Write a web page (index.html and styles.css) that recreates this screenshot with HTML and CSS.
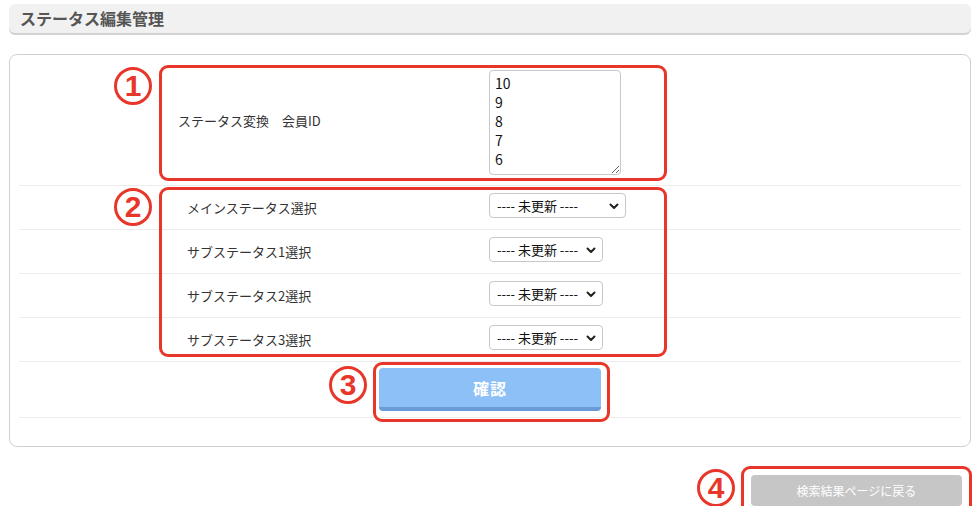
FILE: index.html
```html
<!DOCTYPE html>
<html lang="ja">
<head>
    <meta charset="UTF-8">
    <meta name="viewport" content="width=device-width, initial-scale=1.0">
    <title>ステータス編集管理</title>
    <link rel="stylesheet" href="styles.css">
</head>
<body>
    <h1 class="page-title">ステータス編集管理</h1>

    <form class="panel">
        <div class="row row-first">
            <label class="row-label first" for="member-ids">ステータス変換　会員ID</label>
            <div class="row-value">
                <textarea id="member-ids" class="ids">10
9
8
7
6</textarea>
            </div>
        </div>
        <div class="row">
            <label class="row-label">メインステータス選択</label>
            <div class="row-value">
                <span class="select-wrap wide">
                    <select><option>---- 未更新 ----</option></select>
                    <svg class="chev" width="10" height="7" viewBox="0 0 10 7"><path d="M1.5 1.5 L5 5 L8.5 1.5" fill="none" stroke="#222" stroke-width="2" stroke-linecap="round" stroke-linejoin="round"/></svg>
                </span>
            </div>
        </div>
        <div class="row">
            <label class="row-label">サブステータス1選択</label>
            <div class="row-value">
                <span class="select-wrap">
                    <select><option>---- 未更新 ----</option></select>
                    <svg class="chev" width="10" height="7" viewBox="0 0 10 7"><path d="M1.5 1.5 L5 5 L8.5 1.5" fill="none" stroke="#222" stroke-width="2" stroke-linecap="round" stroke-linejoin="round"/></svg>
                </span>
            </div>
        </div>
        <div class="row">
            <label class="row-label">サブステータス2選択</label>
            <div class="row-value">
                <span class="select-wrap">
                    <select><option>---- 未更新 ----</option></select>
                    <svg class="chev" width="10" height="7" viewBox="0 0 10 7"><path d="M1.5 1.5 L5 5 L8.5 1.5" fill="none" stroke="#222" stroke-width="2" stroke-linecap="round" stroke-linejoin="round"/></svg>
                </span>
            </div>
        </div>
        <div class="row">
            <label class="row-label">サブステータス3選択</label>
            <div class="row-value">
                <span class="select-wrap">
                    <select><option>---- 未更新 ----</option></select>
                    <svg class="chev" width="10" height="7" viewBox="0 0 10 7"><path d="M1.5 1.5 L5 5 L8.5 1.5" fill="none" stroke="#222" stroke-width="2" stroke-linecap="round" stroke-linejoin="round"/></svg>
                </span>
            </div>
        </div>
        <div class="row row-submit">
            <button type="button" class="btn-confirm">確認</button>
        </div>

        <!-- annotation marks -->
        <span class="mark mark-1">1</span>
        <span class="note-box box-1"></span>
        <span class="mark mark-2">2</span>
        <span class="note-box box-2"></span>
        <span class="mark mark-3">3</span>
        <span class="note-box box-3"></span>
    </form>

    <div class="footer">
        <div class="back-wrap">
            <span class="mark mark-4">4</span>
            <span class="note-box box-4"></span>
            <button type="button" class="btn-back">検索結果ページに戻る</button>
        </div>
    </div>
</body>
</html>
```

FILE: styles.css
```css
body {
    margin: 0;
    font-family: "Noto Sans CJK JP", "Noto Sans", sans-serif;
    color: #333;
    background: #fff;
}
.page-title {
    margin: 4px 9px 0;
    height: 29px;
    padding-left: 11px;
    background: #f1f1f1;
    border-radius: 6px;
    box-shadow: 0 2px 0 #d2d2d2;
    font-size: 16px;
    font-weight: bold;
    line-height: 28px;
    color: #555;
}
.panel {
    position: relative;
    margin: 21px 9px 0;
    padding: 0 9px 28px;
    border: 1px solid #cfcfcf;
    border-radius: 8px;
}
.row {
    display: grid;
    grid-template-columns: 470px 1fr;
    align-items: center;
    height: 43px;
    border-bottom: 1px solid #ececec;
}
.row-first {
    height: 130px;
}
.row-label {
    padding-left: 168px;
    font-size: 13px;
    color: #333;
}
.row-label.first {
    padding-left: 159px;
}
.row-value {
    display: flex;
    align-items: center;
}
.ids {
    display: block;
    width: 132px;
    height: 105px;
    box-sizing: border-box;
    margin-top: 5px;
    padding: 3px 5px;
    border: 1px solid #c8c8c8;
    border-radius: 4px;
    font-family: "Noto Sans CJK JP", sans-serif;
    font-size: 14px;
    line-height: 19px;
    color: #111;
    overflow: hidden;
}
.select-wrap {
    position: relative;
    display: block;
    height: 25px;
    margin-bottom: 5px;
}
.select-wrap select {
    display: block;
    appearance: none;
    -webkit-appearance: none;
    width: 114px;
    height: 25px;
    padding: 0 0 0 7px;
    border: 1px solid #c8c8c8;
    border-radius: 4px;
    background: #fff;
    font-family: "Noto Sans CJK JP", sans-serif;
    font-size: 13px;
    color: #111;
}
.select-wrap.wide select {
    width: 137px;
}
.chev {
    position: absolute;
    right: 7px;
    top: 10px;
    pointer-events: none;
}
.row-submit {
    display: flex;
    justify-content: center;
    height: 55px;
}
.btn-confirm {
    width: 222px;
    height: 43px;
    border: none;
    border-bottom: 4px solid #6a9bd6;
    border-radius: 4px;
    background: #8cc0f7;
    color: #fff;
    font-family: "Noto Sans CJK JP", sans-serif;
    font-size: 16px;
    font-weight: bold;
    letter-spacing: 1px;
}
.footer {
    display: flex;
    justify-content: flex-end;
    margin: 28px 18px 0 0;
}
.back-wrap {
    position: relative;
}
.btn-back {
    display: block;
    width: 211px;
    height: 31px;
    border: none;
    border-radius: 4px;
    background: #c6c6c6;
    color: #fff;
    font-family: "Noto Sans CJK JP", sans-serif;
    font-size: 12px;
}

/* red annotation overlays */
.note-box {
    position: absolute;
    border: 3px solid #e8372a;
    border-radius: 9px;
    pointer-events: none;
}
.box-1 { left: 149px; top: 10px; width: 502px; height: 110px; }
.box-2 { left: 149px; top: 132px; width: 502px; height: 164px; }
.box-3 { left: 363px; top: 307px; width: 231px; height: 54px; }
.box-4 { left: -10px; top: -9px; width: 225px; height: 43px; }
.mark {
    position: absolute;
    display: flex;
    align-items: center;
    justify-content: center;
    width: 38px;
    height: 38px;
    box-sizing: border-box;
    border: 3px solid #e8372a;
    border-radius: 50%;
    background: #fff;
    font-family: "Liberation Sans", sans-serif;
    font-size: 30px;
    font-weight: bold;
    line-height: 1;
    color: #e8372a;
}
.mark-1 { left: 104px; top: 12px; }
.mark-2 { left: 104px; top: 133px; }
.mark-3 { left: 319px; top: 311px; }
.mark-4 { left: -54px; top: -6px; }
```
